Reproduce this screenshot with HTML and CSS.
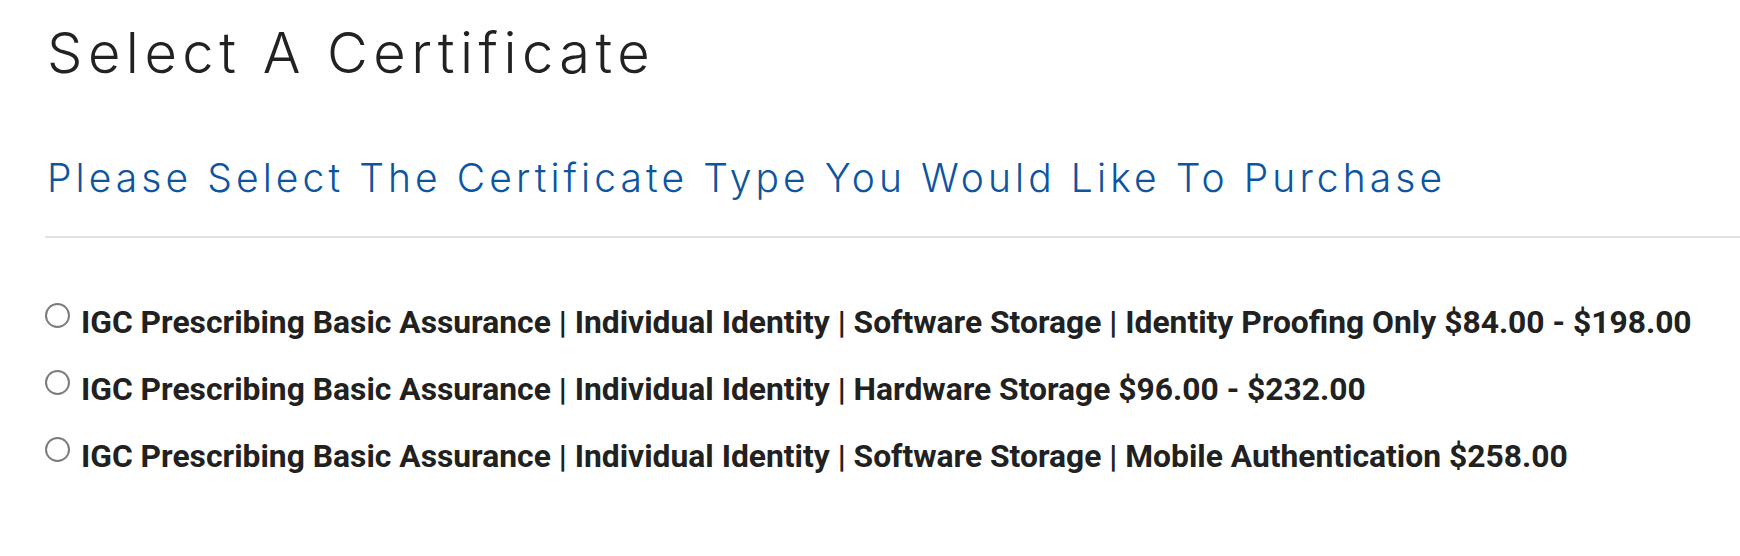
FILE: index.html
```html
<!DOCTYPE html>
<html lang="en">
<head>
<meta charset="utf-8">
<title>Select A Certificate</title>
<link rel="stylesheet" href="styles.css">
</head>
<body>
<main class="page">
  <h1 class="page-title">Select A Certificate</h1>
  <h2 class="section-title">Please Select The Certificate Type You Would Like To Purchase</h2>
  <form class="cert-list">
    <label class="cert-option"><input type="radio" name="cert" class="cert-radio"> IGC Prescribing Basic Assurance | Individual Identity | Software Storage | Identity Proofing Only $84.00 - $198.00</label>
    <label class="cert-option"><input type="radio" name="cert" class="cert-radio"> IGC Prescribing Basic Assurance | Individual Identity | Hardware Storage $96.00 - $232.00</label>
    <label class="cert-option"><input type="radio" name="cert" class="cert-radio"> IGC Prescribing Basic Assurance | Individual Identity | Software Storage | Mobile Authentication $258.00</label>
  </form>
</main>
</body>
</html>
```
FILE: styles.css
```css
html, body {
  margin: 0;
  padding: 0;
  background: #fff;
}
.page {
  padding: 20px 0 0 45px;
}
.page-title {
  margin: 0;
  font-family: Inter, "Noto Sans", sans-serif;
  font-weight: 300;
  font-size: 56px;
  line-height: 1.2;
  letter-spacing: 5.5px;
  color: #222;
  padding-left: 2px;
}
.section-title {
  margin: 68px 0 0 0;
  padding: 0 0 34px 2px;
  font-family: Inter, "Noto Sans", sans-serif;
  font-weight: 300;
  font-size: 39px;
  line-height: 1.2;
  letter-spacing: 4.08px;
  color: #0d559f;
  border-bottom: 2px solid #e2e2e2;
}
.cert-list {
  margin-top: 51px;
  display: flex;
  flex-direction: column;
}
.cert-option {
  display: block;
  font-family: Roboto, "Liberation Sans", sans-serif;
  font-weight: 700;
  font-size: 31.8px;
  line-height: 67px;
  color: #212121;
  white-space: nowrap;
}
.cert-radio {
  -webkit-appearance: none;
  appearance: none;
  box-sizing: border-box;
  width: 25px;
  height: 25px;
  margin: 0 3px 5px 0;
  border: 2px solid #7c7c7c;
  border-radius: 50%;
  background: #fff;
  vertical-align: baseline;
}
```
